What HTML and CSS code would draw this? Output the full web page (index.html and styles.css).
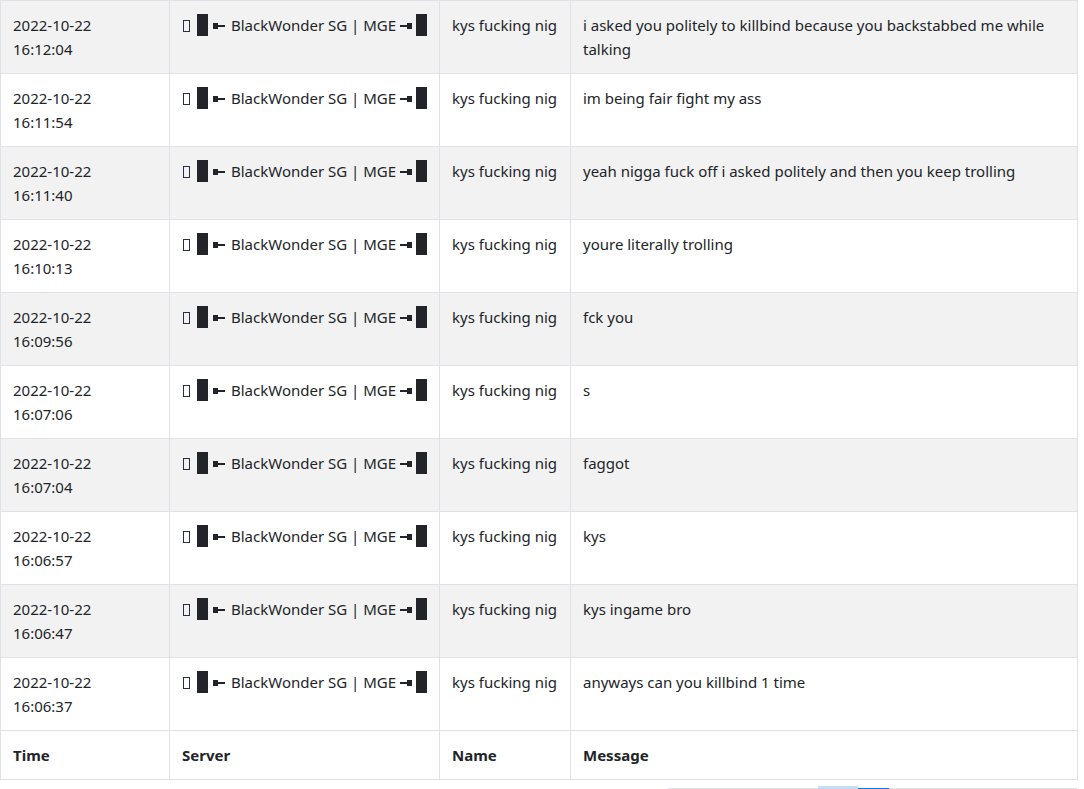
FILE: index.html
```html
<!DOCTYPE html>
<html>
<head>
<meta charset="utf-8">
<link rel="stylesheet" href="styles.css">
</head>
<body>
<table class="log">
  <colgroup>
    <col class="c-time"><col class="c-server"><col class="c-name"><col class="c-msg">
  </colgroup>
  <tbody>
    <tr><td>2022-10-22<br>16:12:04</td><td class="srv"><span class="tofu"></span><span class="blk">█</span><span class="arr l"></span><span class="sname">BlackWonder SG | MGE</span><span class="arr r"></span><span class="blk">█</span></td><td>kys fucking nig</td><td>i asked you politely to killbind because you backstabbed me while talking</td></tr>
    <tr><td>2022-10-22<br>16:11:54</td><td class="srv"><span class="tofu"></span><span class="blk">█</span><span class="arr l"></span><span class="sname">BlackWonder SG | MGE</span><span class="arr r"></span><span class="blk">█</span></td><td>kys fucking nig</td><td>im being fair fight my ass</td></tr>
    <tr><td>2022-10-22<br>16:11:40</td><td class="srv"><span class="tofu"></span><span class="blk">█</span><span class="arr l"></span><span class="sname">BlackWonder SG | MGE</span><span class="arr r"></span><span class="blk">█</span></td><td>kys fucking nig</td><td>yeah nigga fuck off i asked politely and then you keep trolling</td></tr>
    <tr><td>2022-10-22<br>16:10:13</td><td class="srv"><span class="tofu"></span><span class="blk">█</span><span class="arr l"></span><span class="sname">BlackWonder SG | MGE</span><span class="arr r"></span><span class="blk">█</span></td><td>kys fucking nig</td><td>youre literally trolling</td></tr>
    <tr><td>2022-10-22<br>16:09:56</td><td class="srv"><span class="tofu"></span><span class="blk">█</span><span class="arr l"></span><span class="sname">BlackWonder SG | MGE</span><span class="arr r"></span><span class="blk">█</span></td><td>kys fucking nig</td><td>fck you</td></tr>
    <tr><td>2022-10-22<br>16:07:06</td><td class="srv"><span class="tofu"></span><span class="blk">█</span><span class="arr l"></span><span class="sname">BlackWonder SG | MGE</span><span class="arr r"></span><span class="blk">█</span></td><td>kys fucking nig</td><td>s</td></tr>
    <tr><td>2022-10-22<br>16:07:04</td><td class="srv"><span class="tofu"></span><span class="blk">█</span><span class="arr l"></span><span class="sname">BlackWonder SG | MGE</span><span class="arr r"></span><span class="blk">█</span></td><td>kys fucking nig</td><td>faggot</td></tr>
    <tr><td>2022-10-22<br>16:06:57</td><td class="srv"><span class="tofu"></span><span class="blk">█</span><span class="arr l"></span><span class="sname">BlackWonder SG | MGE</span><span class="arr r"></span><span class="blk">█</span></td><td>kys fucking nig</td><td>kys</td></tr>
    <tr><td>2022-10-22<br>16:06:47</td><td class="srv"><span class="tofu"></span><span class="blk">█</span><span class="arr l"></span><span class="sname">BlackWonder SG | MGE</span><span class="arr r"></span><span class="blk">█</span></td><td>kys fucking nig</td><td>kys ingame bro</td></tr>
    <tr><td>2022-10-22<br>16:06:37</td><td class="srv"><span class="tofu"></span><span class="blk">█</span><span class="arr l"></span><span class="sname">BlackWonder SG | MGE</span><span class="arr r"></span><span class="blk">█</span></td><td>kys fucking nig</td><td>anyways can you killbind 1 time</td></tr>
  </tbody>
  <tfoot>
    <tr><th>Time</th><th>Server</th><th>Name</th><th>Message</th></tr>
  </tfoot>
</table>
<div class="pager">
  <span class="pg-line"></span>
  <span class="pg-btn"></span>
  <span class="pg-active"></span>
  <span class="pg-line rest"></span>
</div>
</body>
</html>
```
FILE: styles.css
```css
html, body {
  margin: 0;
  padding: 0;
  background: #fff;
}
body {
  font-family: "Noto Sans", "Open Sans", sans-serif;
  font-size: 15px;
  line-height: 24px;
  color: #212529;
}
.log {
  border-collapse: collapse;
  table-layout: fixed;
  width: 1077px;
}
.c-time { width: 169px; }
.c-server { width: 270px; }
.c-name { width: 131px; }
.c-msg { width: 507px; }
.log td, .log th {
  border: 1px solid #dee2e6;
  padding: 12px 12px;
  vertical-align: top;
  text-align: left;
}
.log tbody tr:nth-child(odd) { background: #f2f2f2; }
.log th { font-weight: 700; }
.srv { white-space: nowrap; }
.tofu {
  display: inline-block;
  box-sizing: border-box;
  width: 7px;
  height: 12px;
  border: 1px solid #2a2f45;
  margin-left: 1px;
  margin-right: 7px;
  vertical-align: -1px;
}
.blk {
  display: inline-block;
  width: 11px;
  height: 22px;
  background: #212529;
  color: transparent;
  overflow: hidden;
  vertical-align: -5px;
  font-size: 1px;
  line-height: 1px;
}
.arr {
  display: inline-block;
  width: 12px;
  height: 2px;
  background: #212529;
  vertical-align: 4px;
  position: relative;
}
.arr.l { margin: 0 6px 0 5px; }
.arr.r { margin: 0 4px 0 4px; }
.arr::after {
  content: "";
  position: absolute;
  top: -2px;
  width: 5px;
  height: 6px;
  background: #212529;
}
.arr.l::after { left: 0; }
.arr.r::after { right: 0; }
.pager {
  display: flex;
  align-items: flex-start;
  margin-top: 6px;
  padding-left: 668px;
  height: 4px;
}
.pg-line {
  width: 150px;
  height: 1px;
  margin-top: 2px;
  background: #dee2e6;
}
.pg-line.rest { width: 188px; }
.pg-btn {
  width: 40px;
  height: 4px;
  background: #c4defa;
}
.pg-active {
  width: 31px;
  height: 2px;
  margin-top: 2px;
  background: #007bff;
}
```
